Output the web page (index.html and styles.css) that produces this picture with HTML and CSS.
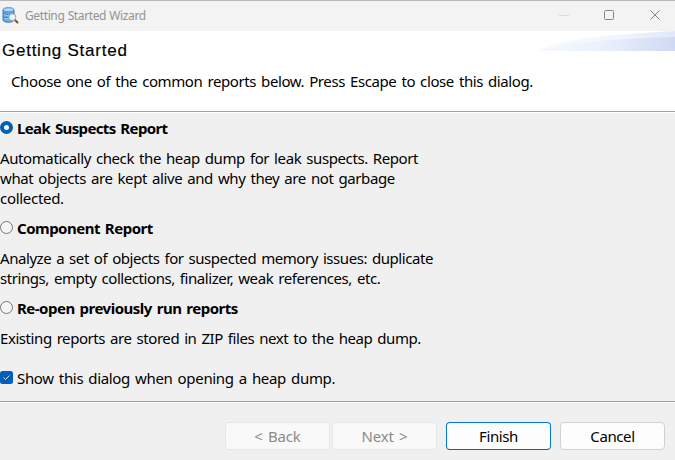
FILE: index.html
```html
<!DOCTYPE html>
<html lang="en">
<head>
<meta charset="utf-8">
<title>Getting Started Wizard</title>
<link rel="stylesheet" href="styles.css">
</head>
<body>
<div class="window">
  <div class="titlebar">
    <svg class="app-icon" width="17" height="17" viewBox="0 0 17 17">
      <path d="M1 3v10c0 3 11 3 11 0V3z" fill="#67ade9" stroke="#3476c5"/>
      <path d="M1.5 6c1 2 9 2 10 0M1.5 9.500c1 2 9 2 10 0" fill="none" stroke="#245dae"/>
      <path d="M2 7.500c2 1 5 1 7 0M2 11c2 1 4 1 6 0" fill="none" stroke="#a5dcfa"/>
      <ellipse cx="6.500" cy="2.800" rx="5.300" ry="2.100" fill="#a9dcf8" stroke="#4086cc"/>
      <path d="M12.500 12.500l3 3" stroke="#735326" stroke-width="2" stroke-linecap="round"/>
      <circle cx="10.300" cy="10.200" r="3.500" fill="#e5f2f9" stroke="#a0a39f"/>
    </svg>
    <span class="caption">Getting Started Wizard</span>
    <svg class="controls" width="103" height="11" viewBox="0 0 103 11" fill="none">
      <path d="M0 5.500h10" stroke="#dcdcdc"/>
      <rect x="45.500" y=".5" width="9" height="9" rx="1" stroke="#858585"/>
      <path d="M91.500.5l9 9m0-9l-9 9" stroke="#858585"/>
    </svg>
  </div>
  <header class="header">
    <svg class="swoosh" width="138" height="20" viewBox="0 0 138 20">
      <defs>
        <linearGradient id="a"><stop offset="0" stop-color="#f7fafe"/><stop offset=".6" stop-color="#f1f5fd"/><stop offset="1" stop-color="#e0e8fa"/></linearGradient>
        <linearGradient id="b"><stop offset="0" stop-color="#f7fafe"/><stop offset=".5" stop-color="#eaeffb"/><stop offset="1" stop-color="#d0daf5"/></linearGradient>
      </defs>
      <path d="M0 20C22 8 78 3 138 0v20z" fill="url(#a)"/>
      <path d="M0 20C30 11 78 8 138 6v14z" fill="url(#b)"/>
    </svg>
    <h1 class="heading">Getting Started</h1>
    <p class="intro">Choose one of the common reports below. Press Escape to close this dialog.</p>
  </header>
  <main class="content">
    <div class="option"><span class="radio radio-on"></span><b class="leak">Leak Suspects Report</b></div>
    <p class="text"><span class="l1">Automatically check the heap dump for leak suspects. Report</span><br><span class="l2">what objects are kept alive and why they are not garbage</span><br><span class="l3">collected.</span></p>
    <div class="option"><span class="radio"></span><b class="component">Component Report</b></div>
    <p class="text"><span class="l4">Analyze a set of objects for suspected memory issues: duplicate</span><br><span class="l5">strings, empty collections, finalizer, weak references, etc.</span></p>
    <div class="option"><span class="radio"></span><b class="reopen">Re-open previously run reports</b></div>
    <p class="text"><span class="l6">Existing reports are stored in ZIP files next to the heap dump.</span></p>
    <div class="option show"><svg class="check" width="13" height="13" viewBox="0 0 13 13"><rect width="13" height="13" rx="2.500" fill="#005fb8"/><path d="M3.500 6.500l2 2 4-4" fill="none" stroke="#d5e6f5"/></svg><span class="l7">Show this dialog when opening a heap dump.</span></div>
  </main>
  <footer class="footer">
    <span class="btn disabled">&lt; Back</span>
    <span class="btn disabled">Next &gt;</span>
    <span class="btn primary">Finish</span>
    <span class="btn">Cancel</span>
  </footer>
</div>
</body>
</html>
```
FILE: styles.css
```css
* { box-sizing: border-box; }
body { margin: 0; background: #f0f0f0; color: #000; font: 15px/20px "Noto Sans", "Open Sans", sans-serif; letter-spacing: -.4px; word-spacing: 1.5px; }
h1, p { margin: 0; }
.window { width: 675px; height: 460px; display: flex; flex-direction: column; overflow: hidden; white-space: nowrap; }
.titlebar { height: 31px; flex: none; display: flex; align-items: center; padding: 0 13px 0 2px; background: #f3f3f3; border-top: 1px solid #b9b9b9; }
.app-icon { flex: none; margin-top: -1px; }
.caption { margin-left: 6px; font-size: 12px; color: #929292; letter-spacing: -.38px; word-spacing: .5px; }
.controls { margin: -1px 0 0 auto; }
.header { height: 82px; flex: none; position: relative; background: #fff; border-bottom: 1px solid #fff; box-shadow: inset 0 -1px #a0a0a0; padding-top: 10px; }
.swoosh { position: absolute; right: 0; top: 0; }
.heading { padding-left: 2px; font: 17px/20px "Liberation Sans", Arial, sans-serif; letter-spacing: .75px; word-spacing: 0; -webkit-text-stroke: .15px #000; }
.intro { margin-top: 10px; padding-left: 11px; }
.content { height: 290px; flex: none; padding-top: 5px; border-bottom: 1px solid #fff; box-shadow: inset 0 -1px #a0a0a0; }
.option { height: 20px; display: flex; align-items: center; gap: 4px; }
.text { margin: 10px 0; }
.leak { letter-spacing: -.63px; }
.component { letter-spacing: -.5px; }
.reopen { letter-spacing: -.5px; }
.l3 { letter-spacing: -.3px; }
.l4 { letter-spacing: -.44px; }
.l5, .l6 { letter-spacing: -.43px; }
.l7 { letter-spacing: -.33px; }
.radio { width: 13px; height: 13px; margin-top: -1px; border: 1px solid #777; border-radius: 50%; background: #f5f5f5; }
.radio-on { border: 4px solid #005fb8; background: #fff; }
.show { margin-top: 20px; }
.check { margin-top: -1px; }
.footer { display: flex; padding: 19px 10px 0 225px; }
.btn { width: 105px; height: 28px; border: 1px solid #d0d0d0; border-radius: 4px; background: #fdfdfd; text-align: center; line-height: 26px; margin-left: 9px; }
.disabled { color: #8b8b8b; background: #f9f9f9; border-color: #e7e7e7; margin-left: 2px; letter-spacing: -.15px; }
.disabled:first-child { margin-left: 0; }
.primary { border-color: #0078d4; border-bottom-color: #0067c0; }
```
